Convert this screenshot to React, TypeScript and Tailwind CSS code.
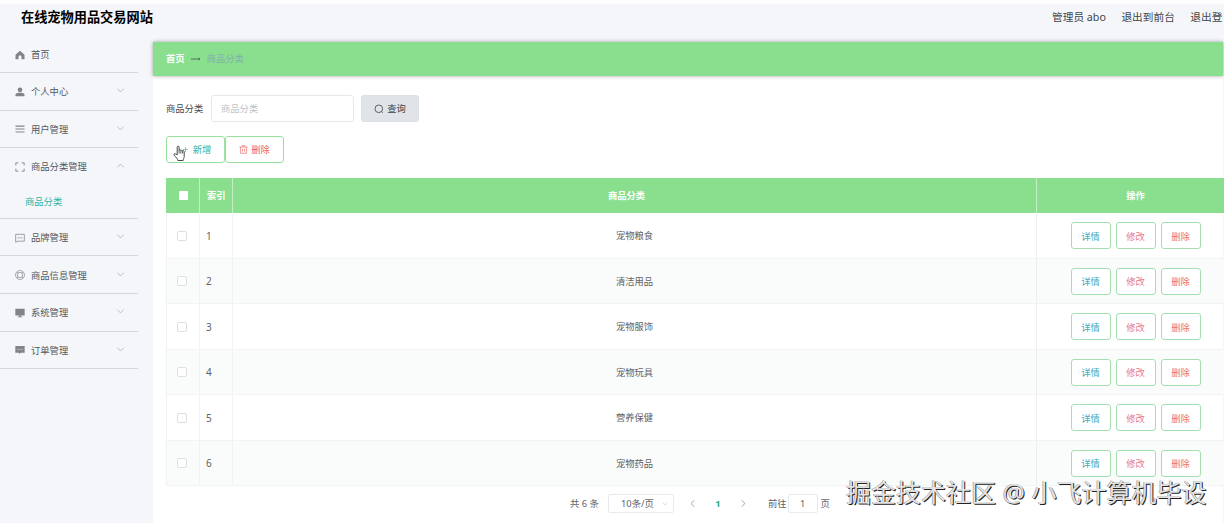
import type { ReactNode } from "react";

interface MenuItem {
  label: string;
  icon: ReactNode;
  open?: boolean;
  children?: string[];
}

const menus: MenuItem[] = [
  {
    label: "个人中心",
    icon: (
      <g fill="currentColor">
        <circle cx="6" cy="3.4" r="2.8" />
        <path d="M.6 11V9.2C.6 7.6 3 7 6 7s5.4.6 5.4 2.2V11z" />
      </g>
    ),
  },
  {
    label: "用户管理",
    icon: (
      <path
        d="M.6 2.5h10.8M.6 6h10.8M.6 9.5h10.8"
        stroke="currentColor"
        strokeWidth="1.3"
      />
    ),
  },
  {
    label: "商品分类管理",
    icon: (
      <path
        d="M1 4V1h3M8 1h3v3M11 8v3H8M4 11H1V8"
        fill="none"
        stroke="currentColor"
        strokeWidth="1.1"
      />
    ),
    open: true,
    children: ["商品分类"],
  },
  {
    label: "品牌管理",
    icon: (
      <g fill="none" stroke="currentColor" strokeWidth="0.9">
        <path d="M.8 1.6h10.4v8.2H3.6L.8 11z" />
        <path d="M3.2 5.8h1.2M5.4 5.8h1.2M7.6 5.8h1.2" strokeWidth="1.2" />
      </g>
    ),
  },
  {
    label: "商品信息管理",
    icon: (
      <g fill="none" stroke="currentColor" strokeWidth="0.8">
        <circle cx="6" cy="6" r="5.4" />
        <circle cx="6" cy="6" r="3.2" />
        <path d="M2.3 2.3l1.5 1.5M9.7 2.3L8.2 3.8M2.3 9.7l1.5-1.5M9.7 9.7L8.2 8.2" />
      </g>
    ),
  },
  {
    label: "系统管理",
    icon: (
      <path
        d="M.4 1h11.2v8H7v1.1h1.8v.9H3.2v-.9H5V9H.4z"
        fill="currentColor"
      />
    ),
  },
  {
    label: "订单管理",
    icon: (
      <g>
        <path d="M.4 1.2h11.2v8.2H6.8L5 11.2V9.4H.4z" fill="currentColor" />
        <path
          d="M2.8 5.3h1.4M5.3 5.3h1.4M7.8 5.3h1.4"
          stroke="#f4f6fa"
          strokeWidth="0.8"
        />
      </g>
    ),
  },
];

const rows = [
  "宠物粮食",
  "清洁用品",
  "宠物服饰",
  "宠物玩具",
  "营养保健",
  "宠物药品",
];

function Chevron({ className }: { className: string }) {
  return (
    <svg viewBox="0 0 10 10" className={className}>
      <path
        d="M1.5 3l3.5 3.6L8.5 3"
        fill="none"
        stroke="currentColor"
        strokeWidth="1"
      />
    </svg>
  );
}

function MenuIcon({ children }: { children: ReactNode }) {
  return (
    <svg
      viewBox="0 0 12 12"
      className="mr-[6px] size-[10px] shrink-0 text-[#808388]"
    >
      {children}
    </svg>
  );
}

function Sidebar() {
  return (
    <aside className="w-[153px] shrink-0">
      <nav className="w-[138px] text-[#55585d]">
        <div className="flex h-[38px] items-center border-b border-[#d4d6db] pt-[2px] pl-[15px]">
          <MenuIcon>
            <path
              d="M6 .8L.6 5.8v5.4h3.6V8a1.8 1.8 0 013.6 0v3.2h3.6V5.8z"
              fill="currentColor"
            />
          </MenuIcon>
          首页
        </div>

        {menus.map((item) => (
          <div key={item.label} className="border-b border-[#d4d6db]">
            <div className="flex h-[36.6px] items-center pt-px pr-[13px] pl-[15px]">
              <MenuIcon>{item.icon}</MenuIcon>
              <span className="flex-1">{item.label}</span>
              <Chevron
                className={
                  item.open
                    ? "mb-[2px] size-[9px] rotate-180 text-[#b5b8be]"
                    : "mb-[2px] size-[9px] text-[#b5b8be]"
                }
              />
            </div>
            {item.children?.map((child) => (
              <div
                key={child}
                className="flex h-[33px] items-center pl-[25px] text-[#2fb3a4]"
              >
                {child}
              </div>
            ))}
          </div>
        ))}
      </nav>
    </aside>
  );
}

function RowButton({
  className,
  children,
}: {
  className: string;
  children: ReactNode;
}) {
  return (
    <button
      className={`h-[27px] w-[40px] rounded-[3px] border border-[#a5dfb1] bg-white pt-px ${className}`}
    >
      {children}
    </button>
  );
}

function CategoryTable() {
  return (
    <div className="mt-[14.5px] w-[1068px]">
      <div className="flex h-[35.5px] bg-[#89df8e] font-bold text-white">
        <div className="flex w-[34px] items-center justify-center border-r border-[#c4efc7] pl-px">
          <span className="size-[9px] rounded-[1px] bg-white" />
        </div>
        <div className="flex w-[33px] items-center border-r border-[#c4efc7] pl-[7px]">
          索引
        </div>
        <div className="flex w-[804px] items-center justify-center border-r border-[#c4efc7] pr-[16px]">
          商品分类
        </div>
        <div className="flex w-[197px] items-center justify-center">操作</div>
      </div>

      {rows.map((name, index) => (
        <div
          key={name}
          className="flex h-[45.5px] border-b border-l border-[#f1f3f4] odd:bg-[#fafcfb]"
        >
          <div className="flex w-[33px] items-center border-r border-[#f1f3f4] pt-px pl-[10px]">
            <span className="size-[10px] rounded-[2px] border border-[#dcdfe3] bg-white" />
          </div>
          <div className="flex w-[33px] items-center border-r border-[#f1f3f4] pt-px pl-[6px] text-[10px]">
            {index + 1}
          </div>
          <div className="flex w-[804px] items-center justify-center border-r border-[#eceff0] pt-px">
            {name}
          </div>
          <div className="flex w-[197px] items-center justify-center gap-[5px] pt-px">
            <RowButton className="text-[#44a9bd]">详情</RowButton>
            <RowButton className="text-[#e5789a]">修改</RowButton>
            <RowButton className="text-[#ee7267]">删除</RowButton>
          </div>
        </div>
      ))}
    </div>
  );
}

function Pagination() {
  return (
    <div className="mt-[8px] flex h-[19px] items-center pl-[404px]">
      <span className="w-[38px]">共 6 条</span>
      <div className="flex h-[19px] w-[66px] items-center rounded-[2px] border border-[#e8eaee] pr-[5px] pl-[12px]">
        <span className="flex-1">10条/页</span>
        <Chevron className="size-[6px] text-[#c5c8ce]" />
      </div>
      <Chevron className="ml-[14px] size-[9px] rotate-90 text-[#989ba1]" />
      <span className="w-[42px] text-center font-bold text-[#26ac8c]">1</span>
      <Chevron className="size-[9px] -rotate-90 text-[#989ba1]" />
      <span className="ml-[20px]">前往</span>
      <span className="mr-[3px] ml-px flex h-[19px] w-[30px] items-center justify-center rounded-[2px] border border-[#e8eaee]">
        1
      </span>
      <span>页</span>
    </div>
  );
}

export default function App() {
  return (
    <div className="relative h-[523px] w-[1224px] overflow-hidden border-t-4 border-[#fdfdfe] bg-[#f4f6fa] font-['Noto_Sans','Noto_Sans_CJK_SC',sans-serif] text-[9.3px] leading-none text-[#606266]">
      <header className="flex h-[31px] items-start justify-between whitespace-nowrap">
        <h1 className="mt-[7px] ml-[21px] text-[13.2px] font-bold text-black">
          在线宠物用品交易网站
        </h1>
        <div className="mt-[8px] flex w-[172px] gap-[15.5px] text-[10.7px] text-[#44474b]">
          <span className="shrink-0">管理员 abo</span>
          <span className="shrink-0">退出到前台</span>
          <span className="shrink-0">退出登</span>
        </div>
      </header>

      <div className="flex">
        <Sidebar />

        <main className="h-[488px] w-[1070px] shrink-0 pt-[7px]">
          <div className="relative flex h-[34px] items-center bg-[#89df8e] pl-[13px] shadow-[0_0_4px_rgba(0,0,0,0.35)]">
            <span className="font-bold text-white">首页</span>
            <svg viewBox="0 0 10 6" className="mx-[6px] h-[6px] w-[10px]">
              <path
                d="M0 3h9M7.6 2L9 3 7.6 4"
                fill="none"
                stroke="#4c6650"
                strokeWidth="0.9"
              />
            </svg>
            <span className="text-[#82b0ac]">商品分类</span>
          </div>

          <div className="h-[450px] bg-white pt-[19px] pl-[13px]">
            <div className="flex items-center">
              <span className="w-[45px] text-[#45484d]">商品分类</span>
              <input
                placeholder="商品分类"
                className="h-[27px] w-[143px] rounded-[3px] border border-[#e6e8ec] px-[9px] placeholder:text-[#bfc2c8]"
              />
              <button className="ml-[7px] flex h-[27px] w-[58px] items-center justify-center gap-[3px] rounded-[3px] border border-[#dcdfe3] bg-[#e0e4e8] text-[#3f4247]">
                <svg viewBox="0 0 10 10" className="size-[10px]">
                  <path
                    d="M8.6 4.8a3.8 3.8 0 10-7.6 0 3.8 3.8 0 007.6 0zM7.5 7.5l1.3 1.2"
                    fill="none"
                    stroke="currentColor"
                    strokeWidth="0.8"
                  />
                </svg>
                查询
              </button>
            </div>

            <div className="mt-[14px] flex">
              <button className="relative h-[27px] w-[59px] rounded-[3px] border border-[#98e2a0] pl-[13px] text-[#34b2a4]">
                新增
                <svg
                  viewBox="0 0 16 17"
                  className="absolute top-[8px] left-[6px] h-[17px] w-[16px]"
                >
                  <path
                    d="M10 4.5h5M12.5 2v5"
                    stroke="#6bbdb4"
                    strokeWidth="0.8"
                  />
                  <path
                    d="M4.2 9.8V2.2c0-1.5 1.9-1.5 1.9 0v3.2c.2-.9 1.7-.8 1.8.2.3-.7 1.6-.6 1.7.4.4-.6 1.6-.3 1.6.7v4.6c0 2-1 2.5-1 4.2H4.9c0-1.5-2-3-3.7-5.3-.8-1.2.6-2 1.5-1.2z"
                    fill="#fff"
                    stroke="#45484c"
                    strokeWidth="1"
                    strokeLinejoin="round"
                  />
                  <path
                    d="M6.1 5.5v3M7.9 5.8v2.7M9.6 6.2v2.3"
                    stroke="#45484c"
                    strokeWidth="0.9"
                  />
                </svg>
              </button>
              <button className="flex h-[27px] w-[59px] items-center justify-center gap-[3px] rounded-[3px] border border-[#98e2a0] text-[#ee6262]">
                <svg viewBox="0 0 10 10" className="size-[9px]">
                  <path
                    d="M.5 2.3h9M3.2 2.2V.8h3.6v1.4M1.6 2.4v6.8h6.8V2.4M3.9 4.2v3.2M6.1 4.2v3.2"
                    fill="none"
                    stroke="currentColor"
                    strokeWidth="0.7"
                  />
                </svg>
                删除
              </button>
            </div>

            <CategoryTable />
            <Pagination />
          </div>
        </main>
      </div>

      <div className="absolute top-[475px] left-[846px] text-[25px] leading-[26px] whitespace-nowrap text-[#e2e2e2] [text-shadow:1px_1px_0_#222,-0.5px_-0.5px_0_#888]">
        掘金技术社区 @ 小飞计算机毕设
      </div>
    </div>
  );
}
